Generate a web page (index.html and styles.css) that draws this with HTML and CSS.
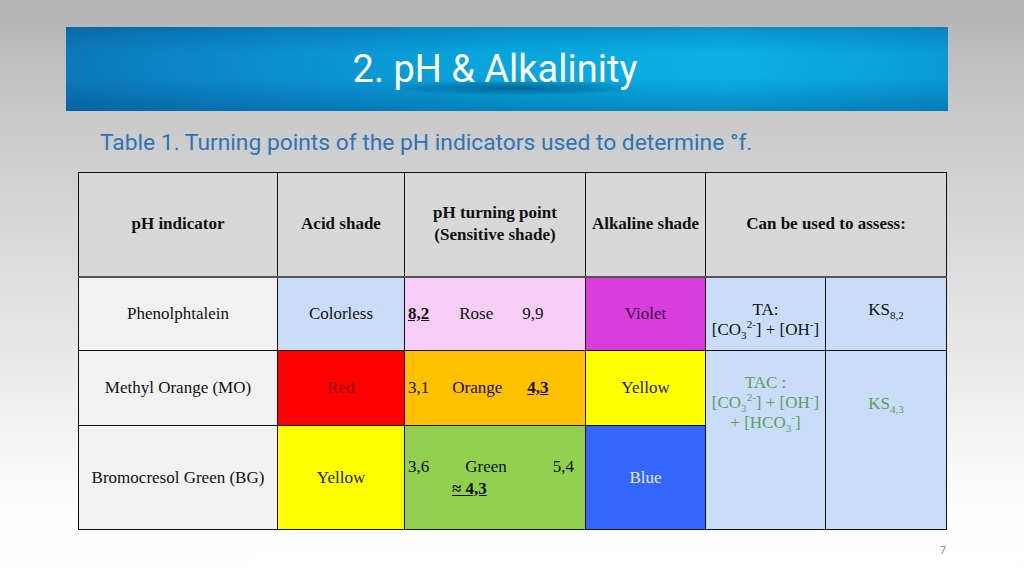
FILE: index.html
```html
<!DOCTYPE html>
<html lang="en">
<head>
<meta charset="utf-8">
<title>2. pH &amp; Alkalinity</title>
<link rel="stylesheet" href="styles.css">
</head>
<body>
<div class="slide">
  <header class="banner">
    <div class="ripple"></div>
    <h1 class="title">2. pH &amp; Alkalinity</h1>
  </header>
  <p class="caption">Table 1. Turning points of the pH indicators used to determine °f.</p>
  <table class="ind">
    <colgroup>
      <col class="c1"><col class="c2"><col class="c3"><col class="c4"><col class="c5"><col class="c6">
    </colgroup>
    <tr class="head">
      <th>pH indicator</th>
      <th>Acid shade</th>
      <th>pH turning point<br>(Sensitive shade)</th>
      <th>Alkaline shade</th>
      <th colspan="2">Can be used to assess:</th>
    </tr>
    <tr class="r1">
      <td class="name">Phenolphtalein</td>
      <td class="colorless">Colorless</td>
      <td class="rose turn"><span class="key">8,2</span><span class="rose-word">Rose</span><span class="rose-end">9,9</span></td>
      <td class="violet">Violet</td>
      <td class="assess top">TA:<br>[CO<sub>3</sub><sup>2-</sup>] + [OH<sup>-</sup>]</td>
      <td class="assess top">KS<sub>8,2</sub></td>
    </tr>
    <tr class="r2">
      <td class="name">Methyl Orange (MO)</td>
      <td class="red">Red</td>
      <td class="orange turn">3,1<span class="or-word">Orange</span><span class="key or-end">4,3</span></td>
      <td class="yellow">Yellow</td>
      <td class="assess top tac" rowspan="2">TAC :<br>[CO<sub>3</sub><sup>2-</sup>] + [OH<sup>-</sup>]<br>+ [HCO<sub>3</sub><sup>-</sup>]</td>
      <td class="assess top tac ks43" rowspan="2">KS<sub>4,3</sub></td>
    </tr>
    <tr class="r3">
      <td class="name">Bromocresol Green (BG)</td>
      <td class="yellow">Yellow</td>
      <td class="green turn">3,6<span class="gr-word">Green</span><span class="gr-end">5,4</span><br><span class="key gr-approx">≈ 4,3</span></td>
      <td class="blue">Blue</td>
    </tr>
  </table>
  <div class="pageno">7</div>
</div>
</body>
</html>
```

FILE: styles.css
```css
html, body {
  margin: 0;
  padding: 0;
}
body {
  width: 1024px;
  height: 576px;
  overflow: hidden;
}
.slide {
  width: 1024px;
  height: 576px;
  display: flex;
  flex-direction: column;
  background: linear-gradient(to bottom, #b3b3b3 0%, #c9c9c9 20%, #dcdcdc 45%, #efefef 70%, #fdfdfd 88%, #ffffff 100%);
  font-family: "Liberation Serif", "Times New Roman", serif;
}
.banner {
  position: relative;
  margin: 27px 76px 0 66px;
  height: 84px;
  display: flex;
  align-items: center;
  justify-content: center;
  padding-right: 24px;
  background:
    linear-gradient(to bottom, rgba(0,60,120,0.25) 0%, rgba(0,0,0,0) 30%, rgba(0,0,0,0) 60%, rgba(0,50,110,0.3) 100%),
    linear-gradient(to right, #0b78b8 0%, #0c90cf 25%, #07a6dd 50%, #0ab0e6 75%, #0a9ad6 100%);
  overflow: hidden;
}
.ripple {
  position: absolute;
  left: 330px;
  top: 54px;
  width: 240px;
  height: 14px;
  border-radius: 50%;
  background: radial-gradient(ellipse at center, rgba(0,40,80,0.45) 0%, rgba(0,40,80,0.15) 55%, rgba(0,40,80,0) 75%);
}
.title {
  position: relative;
  margin: 0;
  font-family: Roboto, "Liberation Sans", sans-serif;
  font-weight: 400;
  font-size: 38px;
  letter-spacing: 0;
  color: #ffffff;
  line-height: 1;
}
.caption {
  margin: 17px 0 0 100px;
  height: 30px;
  line-height: 30px;
  font-family: Roboto, "Liberation Sans", sans-serif;
  font-size: 22.8px;
  color: #2e74b6;
}
.ind {
  margin: 14px 0 0 78px;
  border-collapse: collapse;
  table-layout: fixed;
  width: 868px;
  font-size: 17px;
  color: #111;
}
.c1 { width: 199px; }
.c2 { width: 127px; }
.c3 { width: 181px; }
.c4 { width: 120px; }
.c5 { width: 120px; }
.c6 { width: 121px; }
.ind th, .ind td {
  border: 1px solid #111;
  padding: 0 3px;
  text-align: center;
  vertical-align: middle;
  line-height: 22px;
}
.head { height: 104px; }
.ind .head th {
  background: #d8d8d8;
  font-weight: bold;
  border-bottom: 2px solid #555;
}
.r1 { height: 74px; }
.r2 { height: 75px; }
.r3 { height: 104px; }
.name { background: #f1f1f1; }
.colorless { background: #c9ddf8; }
.rose { background: #f6cdf6; }
.violet { background: #d93ddd; color: #3c1140; }
.red { background: #ff0000; color: #8c0000; }
.orange { background: #ffc000; }
.yellow { background: #ffff00; color: #222; }
.green { background: #92d050; }
.blue { background: #3366ff; color: #e3eaff; }
.ind td.assess {
  background: #c9ddf8;
  line-height: 20px;
}
.ind td.top {
  vertical-align: top;
  padding-top: 22px;
}
.tac { color: #5e9e5e; }
.ind td.ks43 { padding-top: 43px; }
.ind td.turn { text-align: left; }
.key {
  font-weight: bold;
  text-decoration: underline;
}
.rose-word { margin-left: 30px; }
.rose-end { margin-left: 29px; }
.or-word { margin-left: 23px; }
.or-end { margin-left: 25px; }
.gr-word { margin-left: 36px; }
.gr-end { margin-left: 46px; }
.gr-approx { margin-left: 44px; }
sub, sup {
  font-size: 0.65em;
  line-height: 0;
}
.pageno {
  margin: 12px 78px 0 0;
  text-align: right;
  font-family: "Open Sans", "Liberation Sans", sans-serif;
  font-size: 11px;
  color: #8a8a8a;
}
```
